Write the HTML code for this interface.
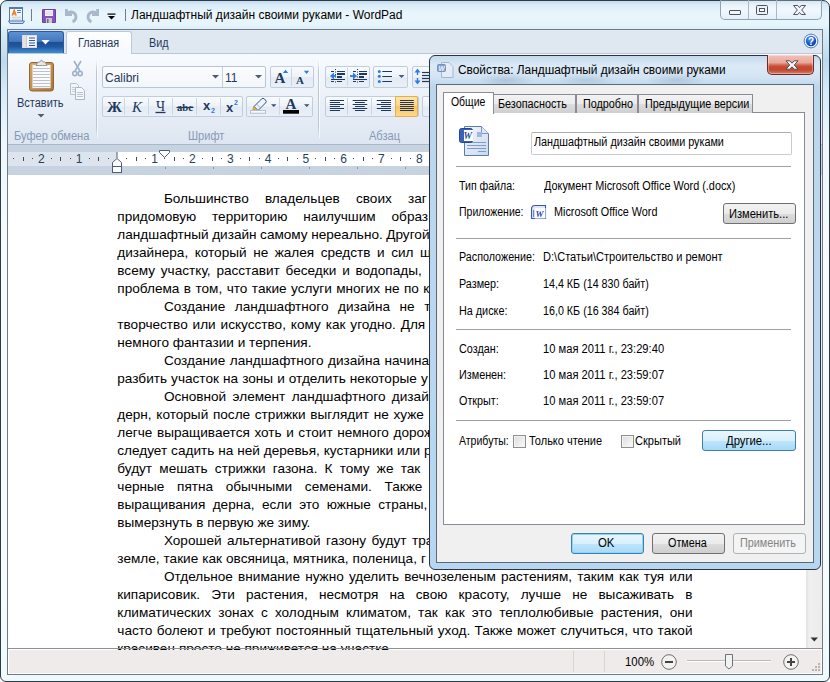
<!DOCTYPE html>
<html><head><meta charset="utf-8">
<style>
*{box-sizing:border-box;margin:0;padding:0}
html,body{width:830px;height:682px;overflow:hidden;background:#fff}
body{position:relative;font-family:"Liberation Sans",sans-serif;font-size:12px;color:#000}
.a{position:absolute}
.sx{display:inline-block;transform-origin:0 0;white-space:nowrap}
#win{left:0;top:0;width:830px;height:682px;border:1px solid #2d3a47;border-radius:7px 7px 6px 6px;
 background:linear-gradient(180deg,#c4dcef 0px,#d9ecf8 4px,#e9f5fc 12px,#e6f5fb 24px,#d8eef8 29px,#bcd9ee 60px,#d6ecf8 90px,#eef7fc 140px,#f8fbfd 260px,#f6fbfd 600px,#eefafd 682px)}
#client{left:7px;top:29px;width:816px;height:646px;background:#fff;border:1px solid #707a86}
.dl,.dj{position:absolute;font-size:13.6px;line-height:16px;color:#000;white-space:nowrap}
.dj{white-space:normal;text-align:justify;text-align-last:justify}
.btnbox{border:1px solid #bfcddf;border-radius:2px;background:linear-gradient(180deg,#f8fafd 0,#eef3f9 48%,#e3eaf3 52%,#eaf0f7 100%)}
.sep{position:absolute;width:1px;height:17px;background:#cdd8e6}
.rn{font-size:12px;color:#2b3f5c;line-height:14px}
.dt{font-size:12px;line-height:14px;white-space:nowrap}
.tab{border:1px solid #898c95;border-bottom:none;background:linear-gradient(180deg,#f2f2f2 0,#ebebeb 50%,#dddddd 51%,#cfcfcf 100%)}
.btn{border:1px solid #707070;border-radius:3px;background:linear-gradient(180deg,#f2f2f2 0,#ebebeb 50%,#dddddd 51%,#cfcfcf 100%)}
.btnhot{border-color:#3c7fb1;background:linear-gradient(180deg,#eaf6fd 0,#d9f0fc 50%,#bee6fd 51%,#a7d9f5 100%)}
.chk{width:13px;height:13px;border:1px solid #8e8f8f;background:linear-gradient(135deg,#dcdcdc,#fbfbfb);box-shadow:inset 0 0 0 1px #f4f4f4}
.tq{font-size:12px;color:#1e395b}
</style></head><body>
<div id="win" class="a"></div>
<!-- title bar content -->
<!-- QAT -->
<svg class="a" style="left:8px;top:6px" width="17" height="18" viewBox="0 0 17 18">
 <defs><linearGradient id="wpg" x1="0" y1="0" x2="0" y2="1"><stop offset="0" stop-color="#ffffff"/><stop offset="1" stop-color="#e4ecf5"/></linearGradient></defs>
 <rect x="1.5" y="1.5" width="13" height="14" fill="url(#wpg)" stroke="#4f7cb3" stroke-width="1"/>
 <rect x="1" y="1" width="14" height="2" fill="#4f7cb3"/>
 <path d="M4.2 9.5 L6.2 4.2 L8.2 9.5 M5 7.8 H7.4" fill="none" stroke="#f37c1c" stroke-width="1.4"/>
 <g stroke="#3a86dc" stroke-width="1"><line x1="9" y1="4.5" x2="13" y2="4.5"/><line x1="9" y1="6.5" x2="13" y2="6.5"/></g>
 <g stroke="#b3bcc8" stroke-width="0.6"><line x1="4" y1="11.3" x2="13" y2="11.3"/><line x1="4" y1="13.3" x2="13" y2="13.3"/></g>
 <path d="M0.5 15 H16.5 L15 17.5 H2 Z" fill="#cfdced" stroke="#4f7cb3" stroke-width="1"/>
</svg>
<div class="a" style="left:31px;top:9px;width:1px;height:12px;background:#6d7d8e"></div>
<svg class="a" style="left:42px;top:9px" width="14" height="14" viewBox="0 0 14 14">
 <rect x="0" y="0" width="14" height="14" rx="1" fill="#8456bd"/>
 <rect x="0.5" y="0.5" width="13" height="13" rx="1" fill="none" stroke="#6a3ea3"/>
 <rect x="3" y="1" width="8" height="6" fill="#f4f2f8"/>
 <g stroke="#cfc6df" stroke-width="0.7"><line x1="3.5" y1="3" x2="10.5" y2="3"/><line x1="3.5" y1="5" x2="10.5" y2="5"/></g>
 <rect x="4" y="9" width="6" height="5" fill="#c9c9cf"/>
 <rect x="5" y="10" width="1.5" height="4" fill="#6a6a72"/>
</svg>
<svg class="a" style="left:64px;top:8px" width="15" height="16" viewBox="0 0 15 16">
 <path d="M3.46 5.46 A5 5 0 1 1 8.55 13.75" fill="none" stroke="#a9b7ca" stroke-width="3"/>
 <path d="M1 1 H3.8 V5.2 H8 V8 H1 Z" fill="#a9b7ca"/>
</svg>
<svg class="a" style="left:85px;top:8px" width="15" height="16" viewBox="0 0 15 16">
 <g transform="translate(15,0) scale(-1,1)">
 <path d="M3.46 5.46 A5 5 0 1 1 8.55 13.75" fill="none" stroke="#a9b7ca" stroke-width="3"/>
 <path d="M1 1 H3.8 V5.2 H8 V8 H1 Z" fill="#a9b7ca"/>
 </g>
</svg>
<svg class="a" style="left:107px;top:13px" width="9" height="7" viewBox="0 0 9 7"><rect x="0.5" y="0.5" width="8" height="1.2" fill="#000"/><path d="M1 3 H8 L4.5 6.5Z" fill="#000"/></svg>
<div class="a" style="left:125px;top:9px;width:1px;height:12px;background:#6d7d8e"></div>
<!-- caption buttons -->
<div class="a" style="left:720px;top:0px;width:102px;height:20px;border:1px solid #8fa2b6;border-top:none;border-radius:0 0 5px 5px;background:linear-gradient(180deg,rgba(255,255,255,0.25),rgba(255,255,255,0.5) 50%,rgba(220,235,247,0.6))"></div>
<div class="a" style="left:748px;top:0px;width:1px;height:19px;background:#a9b9ca"></div>
<div class="a" style="left:776px;top:0px;width:1px;height:19px;background:#a9b9ca"></div>
<div class="a" style="left:729px;top:10px;width:12px;height:5px;border:1px solid #4a5360;border-radius:1px;background:#f3f5f8"></div>
<div class="a" style="left:756px;top:5px;width:12px;height:10px;border:1px solid #4a5360;border-radius:1.5px;background:#eef1f5"></div>
<div class="a" style="left:759px;top:8px;width:6px;height:4px;border:1px solid #4a5360;background:#fbfcfd"></div>
<svg class="a" style="left:793px;top:5px" width="13" height="10" viewBox="0 0 13 10">
 <path d="M0.5 0.5 H4.8 L6.5 2.6 L8.2 0.5 H12.5 L8.7 5 L12.5 9.5 H8.2 L6.5 7.4 L4.8 9.5 H0.5 L4.3 5 Z" fill="#f3f5f8" stroke="#4a5360" stroke-width="1" stroke-linejoin="round"/>
</svg>

<div id="title" class="a" style="left:131px;top:7.5px;font-size:12px;color:#000;white-space:nowrap">Ландшафтный дизайн своими руками - WordPad</div>

<!-- client -->
<div id="client" class="a"></div>
<!-- tab row -->
<div class="a" style="left:8px;top:30px;width:814px;height:23px;background:#dfe7f1"></div>
<div class="a" style="left:8px;top:53px;width:814px;height:1px;background:#b8c7da"></div>
<!-- ribbon body -->
<div class="a" style="left:8px;top:54px;width:814px;height:90px;background:linear-gradient(180deg,#f7fafe 0%,#eef3fa 40%,#e4ebf4 75%,#dde6f1 100%)"></div>
<div class="a" style="left:8px;top:144px;width:814px;height:1px;background:#a9b8cb"></div>

<!-- app button -->
<div class="a" style="left:8px;top:31px;width:56px;height:22px;border:1px solid #2c5aa0;border-bottom:none;border-radius:3px 3px 0 0;background:linear-gradient(180deg,#5b92d2 0,#4478bd 45%,#1f4d93 48%,#2358a0 70%,#3d8fd3 100%)"></div>
<svg class="a" style="left:22px;top:35px" width="30" height="14" viewBox="0 0 30 14">
 <rect x="0.5" y="0.5" width="14" height="12" fill="#f4f4f4" stroke="#dcdcdc"/>
 <rect x="1" y="1" width="3" height="11" fill="#e2e2e2"/>
 <line x1="4.5" y1="1" x2="4.5" y2="12" stroke="#c8c8c8"/>
 <g stroke="#2c5aa0" stroke-width="1"><line x1="7" y1="3" x2="13" y2="3"/><line x1="7" y1="5.5" x2="13" y2="5.5"/><line x1="7" y1="8" x2="13" y2="8"/><line x1="7" y1="10.5" x2="13" y2="10.5"/></g>
 <path d="M19.5 5 L27.5 5 L23.5 9.5 Z" fill="#fff"/>
</svg>
<!-- home tab -->
<div class="a" style="left:66px;top:31px;width:66px;height:23px;border:1px solid #bac9db;border-bottom:none;border-radius:3px 3px 0 0;background:linear-gradient(180deg,#fdfeff,#f6f9fd)"></div>
<div class="a tq" style="left:78px;top:36px"><span class="sx" style="transform:scaleX(0.9)">Главная</span></div>
<div class="a tq" style="left:149px;top:36px"><span class="sx" style="transform:scaleX(0.9)">Вид</span></div>
<!-- help -->
<svg class="a" style="left:803px;top:33px" width="16" height="16" viewBox="0 0 16 16">
 <defs><radialGradient id="hg" cx="0.4" cy="0.3" r="0.75"><stop offset="0" stop-color="#5d9cf5"/><stop offset="0.55" stop-color="#1d5fd8"/><stop offset="1" stop-color="#0d3a9e"/></radialGradient></defs>
 <circle cx="8" cy="8" r="6.9" fill="#f4f8fd" stroke="#4a7cc9" stroke-width="1"/>
 <circle cx="8" cy="8" r="5.2" fill="url(#hg)"/>
 <text x="8.1" y="11.8" font-family="Liberation Sans" font-weight="bold" font-size="10" fill="#fff" text-anchor="middle">?</text>
</svg>
<!-- group separators -->
<div class="a" style="left:96px;top:60px;width:1px;height:78px;background:linear-gradient(180deg,rgba(180,195,215,0),#b8c6d8 15%,#b8c6d8 85%,rgba(180,195,215,0))"></div>
<div class="a" style="left:97px;top:60px;width:1px;height:78px;background:rgba(255,255,255,0.7)"></div>
<div class="a" style="left:318px;top:60px;width:1px;height:78px;background:linear-gradient(180deg,rgba(180,195,215,0),#b8c6d8 15%,#b8c6d8 85%,rgba(180,195,215,0))"></div>
<div class="a" style="left:319px;top:60px;width:1px;height:78px;background:rgba(255,255,255,0.7)"></div>

<!-- clipboard -->
<svg class="a" style="left:28px;top:59px" width="27" height="33" viewBox="0 0 27 33">
 <defs><linearGradient id="cb" x1="0" y1="0" x2="1" y2="1"><stop offset="0" stop-color="#d9a864"/><stop offset="1" stop-color="#a8743a"/></linearGradient></defs>
 <rect x="1.5" y="3.5" width="24" height="28.5" rx="2.5" fill="url(#cb)" stroke="#8f6534" stroke-width="1"/>
 <rect x="4.5" y="6" width="18" height="23" fill="#fbfbfb" stroke="#d8d0c4" stroke-width="0.5"/>
 <g stroke="#b9c3cf" stroke-width="1"><line x1="5" y1="9.5" x2="22" y2="9.5"/><line x1="5" y1="12.5" x2="22" y2="12.5"/><line x1="5" y1="15.5" x2="22" y2="15.5"/><line x1="5" y1="18.5" x2="22" y2="18.5"/><line x1="5" y1="21.5" x2="22" y2="21.5"/><line x1="5" y1="24.5" x2="22" y2="24.5"/><line x1="5" y1="27.5" x2="22" y2="27.5"/></g>
 <path d="M8 6.5 L10 3 L12 3 L13.5 0.8 L15 3 L17 3 L19 6.5 Z" fill="#e8e8e8" stroke="#8a8a8a" stroke-width="0.8"/>
</svg>
<div class="a" style="left:17px;top:96px;color:#1e395b;font-size:12px"><span class="sx" style="transform:scaleX(0.915)">Вставить</span></div>
<svg class="a" style="left:37px;top:114px" width="8" height="4" viewBox="0 0 8 4"><path d="M0.5 0 L7.5 0 L4 3.5Z" fill="#4d5e74"/></svg>
<!-- scissors -->
<svg class="a" style="left:72px;top:60px" width="11" height="17" viewBox="0 0 11 17">
 <g fill="none" stroke="#9fb1c8" stroke-width="1.6"><line x1="2" y1="1" x2="8" y2="11"/><line x1="9" y1="1" x2="3" y2="11"/><circle cx="2.8" cy="13.5" r="2.1"/><circle cx="8.2" cy="13.5" r="2.1"/></g>
</svg>
<!-- copy -->
<svg class="a" style="left:69px;top:82px" width="17" height="18" viewBox="0 0 17 18">
 <path d="M1.5 1.5 H7.5 L9.5 3.5 V12.5 H1.5 Z" fill="#f2f5f9" stroke="#b7c2cf"/>
 <path d="M6.5 5.5 H12.5 L15.5 8.5 V17.5 H6.5 Z" fill="#f6f8fb" stroke="#a9b6c6"/>
 <g stroke="#b9c4d2"><line x1="8" y1="10.5" x2="14" y2="10.5"/><line x1="8" y1="12.5" x2="14" y2="12.5"/><line x1="8" y1="14.5" x2="14" y2="14.5"/></g>
 <g stroke="#c5cdd8"><line x1="3" y1="5.5" x2="6" y2="5.5"/><line x1="3" y1="7.5" x2="6" y2="7.5"/><line x1="3" y1="9.5" x2="6" y2="9.5"/></g>
</svg>

<!-- font name + size boxes -->
<div class="a" style="left:102px;top:66px;width:164px;height:22px;border:1px solid #b6c5d8;border-radius:2px;background:linear-gradient(180deg,#fbfcfe,#f3f6fa)"></div>
<div class="a" style="left:222px;top:67px;width:1px;height:20px;background:#c2cfdf"></div>
<div class="a" style="left:105px;top:70.5px;color:#1e395b;font-size:12px"><span class="sx" style="transform:scaleX(1.0)">Calibri</span></div>
<div class="a" style="left:225px;top:70.5px;color:#1e395b;font-size:12px">11</div>
<svg class="a" style="left:212px;top:75px" width="7" height="4"><path d="M0 0H7L3.5 3.5Z" fill="#4a5d78"/></svg>
<svg class="a" style="left:255px;top:75px" width="7" height="4"><path d="M0 0H7L3.5 3.5Z" fill="#4a5d78"/></svg>
<!-- grow/shrink -->
<div class="a btnbox" style="left:270px;top:66px;width:44px;height:22px"></div>
<div class="a" style="left:291px;top:68px;width:1px;height:18px;background:#c9d5e3"></div>
<svg class="a" style="left:272px;top:68px" width="42" height="18" viewBox="0 0 42 18">
 <text x="2.5" y="15" font-family="Liberation Serif" font-weight="bold" font-size="15" fill="#1e395b">A</text>
 <path d="M10.9 5 L13.55 1.8 L16.2 5Z" fill="#2c7be0"/>
 <text x="24" y="15.5" font-family="Liberation Serif" font-weight="bold" font-size="11" fill="#1e395b">A</text>
 <path d="M31.9 2.8 H37.2 L34.55 5.9Z" fill="#2c7be0"/>
</svg>
<!-- B I U S sub sup -->
<div class="a btnbox" style="left:102px;top:96px;width:141px;height:21px"></div>
<div class="a sep" style="left:124px;top:98px"></div>
<div class="a sep" style="left:148px;top:98px"></div>
<div class="a sep" style="left:172px;top:98px"></div>
<div class="a sep" style="left:196px;top:98px"></div>
<div class="a sep" style="left:220px;top:98px"></div>
<svg class="a" style="left:102px;top:96px" width="142" height="21" viewBox="0 0 142 21">
 <text x="5" y="15.5" font-family="Liberation Serif" font-weight="bold" font-size="15" fill="#1e395b">Ж</text>
 <text x="30" y="15.5" font-family="Liberation Serif" font-style="italic" font-size="15" fill="#1e395b">К</text>
 <text x="54" y="14.5" font-family="Liberation Serif" font-size="14" fill="#1e395b">Ч</text>
 <line x1="53.5" y1="16.5" x2="63.5" y2="16.5" stroke="#1e395b" stroke-width="1.3"/>
 <text x="75" y="14.8" font-family="Liberation Serif" font-weight="bold" font-size="10.5" fill="#1e395b" textLength="16" lengthAdjust="spacingAndGlyphs">abc</text>
 <line x1="74.5" y1="11.5" x2="91.5" y2="11.5" stroke="#1e395b" stroke-width="1.1"/>
 <text x="101" y="14" font-family="Liberation Sans" font-weight="bold" font-size="13" fill="#1e395b">x</text>
 <text x="109" y="17" font-family="Liberation Sans" font-weight="bold" font-size="7" fill="#2c7be0">2</text>
 <text x="124" y="16" font-family="Liberation Sans" font-weight="bold" font-size="13" fill="#1e395b">x</text>
 <text x="132" y="9" font-family="Liberation Sans" font-weight="bold" font-size="7" fill="#2c7be0">2</text>
</svg>
<!-- highlight / color -->
<div class="a btnbox" style="left:246px;top:96px;width:67px;height:21px"></div>
<div class="a sep" style="left:279px;top:98px"></div>
<svg class="a" style="left:246px;top:96px" width="68" height="21" viewBox="0 0 68 21">
 <path d="M8 10.5 L15.5 3 Q17 1.5 18.5 3 L19.5 4 Q21 5.5 19.5 7 L12 14.5 Z" fill="#eef3fb" stroke="#3b5580" stroke-width="1"/>
 <line x1="10.5" y1="8" x2="14.5" y2="12" stroke="#8aa0bf" stroke-width="0.8"/>
 <path d="M8 10.5 L12 14.5 L6.2 15.2 Z" fill="#e2b23a" stroke="#8b6d2a" stroke-width="0.5"/>
 <rect x="4.5" y="14.5" width="15" height="2.8" fill="#f4f7fb" stroke="#b4c2d4" stroke-width="1"/>
 <path d="M25 8.2 H30.5 L27.75 10.9Z" fill="#3b5070"/>
 <text x="39.6" y="12.8" font-family="Liberation Serif" font-weight="bold" font-size="15" fill="#1e395b" style="text-rendering:geometricPrecision">A</text>
 <rect x="37" y="14" width="16" height="3.7" fill="#000"/>
 <path d="M58 8.2 H63.5 L60.75 10.9Z" fill="#3b5070"/>
</svg>

<!-- paragraph: indent -->
<div class="a btnbox" style="left:325px;top:66px;width:45px;height:22px"></div>
<div class="a sep" style="left:347px;top:68px;height:18px"></div>
<svg class="a" style="left:325px;top:66px" width="46" height="22" viewBox="0 0 46 22">
 <g stroke="#1e395b" stroke-width="1">
  <line x1="6" y1="5.5" x2="9" y2="5.5"/><line x1="12" y1="5.5" x2="20" y2="5.5"/>
  <line x1="6" y1="13.5" x2="20" y2="13.5"/><line x1="6" y1="15.5" x2="9" y2="15.5"/><line x1="12" y1="15.5" x2="17" y2="15.5"/>
  <line x1="28" y1="5.5" x2="31" y2="5.5"/><line x1="34" y1="5.5" x2="42" y2="5.5"/>
  <line x1="28" y1="13.5" x2="42" y2="13.5"/><line x1="28" y1="15.5" x2="31" y2="15.5"/><line x1="34" y1="15.5" x2="39" y2="15.5"/>
 </g>
 <g stroke="#1e395b" stroke-width="2"><line x1="12" y1="8" x2="20" y2="8"/><line x1="12" y1="11" x2="17" y2="11"/><line x1="34" y1="8" x2="42" y2="8"/><line x1="34" y1="11" x2="39" y2="11"/></g>
 <line x1="10.5" y1="3" x2="10.5" y2="18" stroke="#1e395b" stroke-dasharray="1 1.5"/>
 <line x1="32.5" y1="3" x2="32.5" y2="18" stroke="#1e395b" stroke-dasharray="1 1.5"/>
 <path d="M5 10 L9 6.5 V13.5Z" fill="#2c7be0"/><line x1="7" y1="10" x2="11" y2="10" stroke="#2c7be0" stroke-width="1.8"/>
 <path d="M32 10 L28 6.5 V13.5Z" fill="#2c7be0"/><line x1="25" y1="10" x2="29" y2="10" stroke="#2c7be0" stroke-width="1.8"/>
</svg>
<!-- list -->
<div class="a btnbox" style="left:373px;top:66px;width:35px;height:22px"></div>
<svg class="a" style="left:373px;top:66px" width="36" height="22" viewBox="0 0 36 22">
 <g fill="#2c7be0"><circle cx="6.3" cy="5.5" r="1.5"/><circle cx="6.3" cy="10.2" r="1.5"/><circle cx="6.3" cy="15.5" r="1.5"/></g>
 <g stroke="#1e395b" stroke-width="1"><line x1="9.3" y1="5.5" x2="19" y2="5.5"/><line x1="9.3" y1="10.5" x2="19" y2="10.5"/><line x1="9.3" y1="15.5" x2="19" y2="15.5"/></g>
 <path d="M25.5 9 H31.5 L28.5 12Z" fill="#4a5d78"/>
</svg>
<!-- line spacing -->
<div class="a btnbox" style="left:412px;top:66px;width:30px;height:22px"></div>
<svg class="a" style="left:412px;top:66px" width="20" height="22" viewBox="0 0 20 22">
 <line x1="5.5" y1="5" x2="5.5" y2="9" stroke="#2c7be0" stroke-width="1.4"/><line x1="5.5" y1="12" x2="5.5" y2="16" stroke="#2c7be0" stroke-width="1.4"/>
 <path d="M2.5 6.5 L5.5 2.5 L8.5 6.5Z M2.5 14.5 L5.5 18.5 L8.5 14.5Z" fill="#2c7be0"/>
 <g stroke="#1e395b" stroke-width="1.2"><line x1="10" y1="6.5" x2="20" y2="6.5"/><line x1="10" y1="9.5" x2="20" y2="9.5"/><line x1="10" y1="12.5" x2="20" y2="12.5"/><line x1="10" y1="15.5" x2="20" y2="15.5"/></g>
</svg>
<!-- align -->
<div class="a btnbox" style="left:325px;top:96px;width:94px;height:21px"></div>
<div class="a sep" style="left:347px;top:98px"></div>
<div class="a sep" style="left:371px;top:98px"></div>
<div class="a" style="left:395px;top:96px;width:23px;height:21px;border:1px solid #e2b052;border-radius:0 2px 2px 0;background:linear-gradient(180deg,#ffe5a8 0,#fcd58a 45%,#fbc45c 50%,#fdd98e 100%)"></div>
<div class="a btnbox" style="left:422px;top:96px;width:20px;height:21px"></div>
<svg class="a" style="left:325px;top:96px" width="120" height="21" viewBox="0 0 120 21">
 <g stroke="#1e395b" stroke-width="1"><line x1="4.8" y1="4.5" x2="19" y2="4.5"/><line x1="27.7" y1="4.5" x2="42.2" y2="4.5"/><line x1="51.8" y1="4.5" x2="66" y2="4.5"/><line x1="75" y1="4.5" x2="88.8" y2="4.5"/><line x1="4.8" y1="6.5" x2="15" y2="6.5"/><line x1="30" y1="6.5" x2="39.8" y2="6.5"/><line x1="56" y1="6.5" x2="66" y2="6.5"/><line x1="75" y1="6.5" x2="88.8" y2="6.5"/><line x1="4.8" y1="8.5" x2="19" y2="8.5"/><line x1="27.7" y1="8.5" x2="42.2" y2="8.5"/><line x1="51.8" y1="8.5" x2="66" y2="8.5"/><line x1="75" y1="8.5" x2="88.8" y2="8.5"/><line x1="4.8" y1="10.5" x2="15" y2="10.5"/><line x1="30" y1="10.5" x2="39.8" y2="10.5"/><line x1="56" y1="10.5" x2="66" y2="10.5"/><line x1="75" y1="10.5" x2="88.8" y2="10.5"/><line x1="4.8" y1="12.5" x2="19" y2="12.5"/><line x1="27.7" y1="12.5" x2="42.2" y2="12.5"/><line x1="51.8" y1="12.5" x2="66" y2="12.5"/><line x1="75" y1="12.5" x2="88.8" y2="12.5"/><line x1="4.8" y1="14.5" x2="15" y2="14.5"/><line x1="30" y1="14.5" x2="39.8" y2="14.5"/><line x1="56" y1="14.5" x2="66" y2="14.5"/><line x1="75" y1="14.5" x2="88.8" y2="14.5"/><line x1="104" y1="6.5" x2="112" y2="6.5"/><line x1="104" y1="8.5" x2="112" y2="8.5"/><line x1="104" y1="10.5" x2="112" y2="10.5"/><line x1="104" y1="12.5" x2="112" y2="12.5"/><line x1="104" y1="14.5" x2="112" y2="14.5"/></g>
</svg>

<!-- group labels -->
<div class="a" style="left:14px;top:129px;color:#8799b4;font-size:12px"><span class="sx" style="transform:scaleX(0.925)">Буфер обмена</span></div>
<div class="a" style="left:188px;top:129px;color:#8799b4;font-size:12px"><span class="sx" style="transform:scaleX(0.92)">Шрифт</span></div>
<div class="a" style="left:369px;top:129px;color:#8799b4;font-size:12px"><span class="sx" style="transform:scaleX(0.92)">Абзац</span></div>

<!-- ruler band -->
<div class="a" style="left:8px;top:145px;width:814px;height:30px;background:#c8d3e2"></div>
<div class="a" style="left:8px;top:152px;width:798px;height:14px;background:#dde4ee"></div>
<div class="a" style="left:117px;top:152px;width:575px;height:14px;background:#fff"></div>
<div class="a" style="left:13px;top:158px;width:1px;height:1px;background:#3a4a60"></div>
<div class="a" style="left:23px;top:157px;width:1px;height:4px;background:#3a4a60"></div>
<div class="a" style="left:32px;top:158px;width:1px;height:1px;background:#3a4a60"></div>
<div class="a rn" style="left:37.9px;top:152px">2</div>
<div class="a" style="left:51px;top:158px;width:1px;height:1px;background:#3a4a60"></div>
<div class="a" style="left:60px;top:157px;width:1px;height:4px;background:#3a4a60"></div>
<div class="a" style="left:70px;top:158px;width:1px;height:1px;background:#3a4a60"></div>
<div class="a rn" style="left:75.7px;top:152px">1</div>
<div class="a" style="left:89px;top:158px;width:1px;height:1px;background:#3a4a60"></div>
<div class="a" style="left:98px;top:157px;width:1px;height:4px;background:#3a4a60"></div>
<div class="a" style="left:108px;top:158px;width:1px;height:1px;background:#3a4a60"></div>
<div class="a" style="left:126px;top:158px;width:1px;height:1px;background:#3a4a60"></div>
<div class="a" style="left:136px;top:157px;width:1px;height:4px;background:#3a4a60"></div>
<div class="a" style="left:145px;top:158px;width:1px;height:1px;background:#3a4a60"></div>
<div class="a rn" style="left:151.3px;top:152px">1</div>
<div class="a" style="left:164px;top:158px;width:1px;height:1px;background:#3a4a60"></div>
<div class="a" style="left:174px;top:157px;width:1px;height:4px;background:#3a4a60"></div>
<div class="a" style="left:183px;top:158px;width:1px;height:1px;background:#3a4a60"></div>
<div class="a rn" style="left:189.1px;top:152px">2</div>
<div class="a" style="left:202px;top:158px;width:1px;height:1px;background:#3a4a60"></div>
<div class="a" style="left:212px;top:157px;width:1px;height:4px;background:#3a4a60"></div>
<div class="a" style="left:221px;top:158px;width:1px;height:1px;background:#3a4a60"></div>
<div class="a rn" style="left:226.9px;top:152px">3</div>
<div class="a" style="left:240px;top:158px;width:1px;height:1px;background:#3a4a60"></div>
<div class="a" style="left:249px;top:157px;width:1px;height:4px;background:#3a4a60"></div>
<div class="a" style="left:259px;top:158px;width:1px;height:1px;background:#3a4a60"></div>
<div class="a rn" style="left:264.7px;top:152px">4</div>
<div class="a" style="left:278px;top:158px;width:1px;height:1px;background:#3a4a60"></div>
<div class="a" style="left:287px;top:157px;width:1px;height:4px;background:#3a4a60"></div>
<div class="a" style="left:297px;top:158px;width:1px;height:1px;background:#3a4a60"></div>
<div class="a rn" style="left:302.5px;top:152px">5</div>
<div class="a" style="left:315px;top:158px;width:1px;height:1px;background:#3a4a60"></div>
<div class="a" style="left:325px;top:157px;width:1px;height:4px;background:#3a4a60"></div>
<div class="a" style="left:334px;top:158px;width:1px;height:1px;background:#3a4a60"></div>
<div class="a rn" style="left:340.3px;top:152px">6</div>
<div class="a" style="left:353px;top:158px;width:1px;height:1px;background:#3a4a60"></div>
<div class="a" style="left:363px;top:157px;width:1px;height:4px;background:#3a4a60"></div>
<div class="a" style="left:372px;top:158px;width:1px;height:1px;background:#3a4a60"></div>
<div class="a rn" style="left:378.1px;top:152px">7</div>
<div class="a" style="left:391px;top:158px;width:1px;height:1px;background:#3a4a60"></div>
<div class="a" style="left:400px;top:157px;width:1px;height:4px;background:#3a4a60"></div>
<div class="a" style="left:410px;top:158px;width:1px;height:1px;background:#3a4a60"></div>
<div class="a rn" style="left:415.9px;top:152px">8</div>
<div class="a" style="left:429px;top:158px;width:1px;height:1px;background:#3a4a60"></div>
<div class="a" style="left:438px;top:157px;width:1px;height:4px;background:#3a4a60"></div>
<div class="a" style="left:448px;top:158px;width:1px;height:1px;background:#3a4a60"></div>
<svg class="a" style="left:159px;top:150px" width="11" height="9" viewBox="0 0 11 9"><path d="M0.5 0.5 H10.5 V2.5 L5.5 7.5 L0.5 2.5 Z" fill="#fff" stroke="#4d5f78"/></svg>
<svg class="a" style="left:111px;top:152px" width="12" height="22" viewBox="0 0 12 22"><path d="M6 0 V6" stroke="#4d5f78"/><path d="M1.5 14.5 V10.5 L6 6.5 L10.5 10.5 V14.5 Z" fill="#fff" stroke="#4d5f78"/><rect x="1.5" y="14.5" width="9" height="6" fill="#fff" stroke="#4d5f78"/></svg>

<div class="a" style="left:165px;top:167px;width:1px;height:2px;background:#8797ad"></div><div class="a" style="left:213px;top:167px;width:1px;height:2px;background:#8797ad"></div><div class="a" style="left:261px;top:167px;width:1px;height:2px;background:#8797ad"></div><div class="a" style="left:309px;top:167px;width:1px;height:2px;background:#8797ad"></div><div class="a" style="left:357px;top:167px;width:1px;height:2px;background:#8797ad"></div><div class="a" style="left:405px;top:167px;width:1px;height:2px;background:#8797ad"></div>
<!-- document -->
<div class="a" style="left:8px;top:175px;width:798px;height:473px;background:#fff"></div>
<div id="doc">
<div class="dl" style="left:163.9px;top:191.29px;word-spacing:12.40px">Большинство владельцев своих заг</div>
<div class="dl" style="left:117.3px;top:209.29px;word-spacing:12.15px">придомовую территорию наилучшим образ</div>
<div class="dl" style="left:117.3px;top:227.29px;word-spacing:-0.28px">ландшафтный дизайн самому нереально. Другой</div>
<div class="dl" style="left:117.3px;top:245.29px;word-spacing:2.74px">дизайнера, который не жалея средств и сил ще</div>
<div class="dl" style="left:117.3px;top:263.29px;word-spacing:2.03px">всему участку, расставит беседки и водопады,</div>
<div class="dl" style="left:117.3px;top:281.29px;word-spacing:0.67px">проблема в том, что такие услуги многих не по ка</div>
<div class="dl" style="left:163.9px;top:299.29px;word-spacing:5.75px">Создание ландшафтного дизайна не т</div>
<div class="dl" style="left:117.3px;top:317.29px;word-spacing:1.11px">творчество или искусство, кому как угодно. Для</div>
<div class="dl" style="left:117.3px;top:335.29px;word-spacing:0.00px">немного фантазии и терпения.</div>
<div class="dl" style="left:163.9px;top:353.29px;word-spacing:0.75px">Создание ландшафтного дизайна начина</div>
<div class="dl" style="left:117.3px;top:371.29px;word-spacing:0.31px">разбить участок на зоны и отделить некоторые у</div>
<div class="dl" style="left:163.9px;top:389.29px;word-spacing:2.58px">Основной элемент ландшафтного дизай</div>
<div class="dl" style="left:117.3px;top:407.29px;word-spacing:0.91px">дерн, который после стрижки выглядит не хуже</div>
<div class="dl" style="left:117.3px;top:425.29px;word-spacing:0.80px">легче выращивается хоть и стоит немного дорож</div>
<div class="dl" style="left:117.3px;top:443.29px;word-spacing:0.14px">следует садить на ней деревья, кустарники или р</div>
<div class="dl" style="left:117.3px;top:461.29px;word-spacing:3.42px">будут мешать стрижки газона. К тому же так</div>
<div class="dl" style="left:117.3px;top:479.29px;word-spacing:8.91px">черные пятна обычными семенами. Также</div>
<div class="dl" style="left:117.3px;top:497.29px;word-spacing:3.59px">выращивания дерна, если это южные страны,</div>
<div class="dl" style="left:117.3px;top:515.29px;word-spacing:0.00px">вымерзнуть в первую же зиму.</div>
<div class="dl" style="left:163.9px;top:533.29px;word-spacing:1.74px">Хорошей альтернативой газону будут тра</div>
<div class="dl" style="left:117.3px;top:551.29px;word-spacing:0.21px">земле, такие как овсяница, мятника, поленица, г</div>
<div class="dj" style="left:163.9px;top:569.29px;width:528.6px">Отдельное внимание нужно уделить вечнозеленым растениям, таким как туя или</div>
<div class="dj" style="left:117.3px;top:587.29px;width:575.2px">кипарисовик. Эти растения, несмотря на свою красоту, лучше не высаживать в</div>
<div class="dj" style="left:117.3px;top:605.29px;width:575.2px">климатических зонах с холодным климатом, так как это теплолюбивые растения, они</div>
<div class="dj" style="left:117.3px;top:623.29px;width:575.2px">часто болеют и требуют постоянный тщательный уход. Также может случиться, что такой</div>
<div class="dl" style="left:117.3px;top:641.29px;width:575.2px">красивец просто не приживется на участке.</div>
</div>
<!-- scrollbar -->
<div class="a" style="left:806px;top:175px;width:16px;height:473px;background:linear-gradient(90deg,#e3e3e3 0,#f0f0f0 2px,#ececec 100%);border-left:1px solid #e6e6e6"></div>
<!-- status bar -->
<div class="a" style="left:8px;top:648px;width:814px;height:1px;background:#8e9095"></div>
<div class="a" style="left:9px;top:650px;width:812px;height:23px;background:#eeebea"></div>

<div class="a" style="left:573px;top:651px;width:1px;height:21px;background:#d9d6d2"></div>
<div class="a" style="left:604px;top:651px;width:1px;height:21px;background:#d9d6d2"></div>
<div class="a" style="left:625px;top:654.8px;font-size:12px;line-height:14px;color:#000;white-space:nowrap"><span class="sx" style="transform:scaleX(0.95)">100%</span></div>
<svg class="a" style="left:660px;top:653px" width="140" height="18" viewBox="0 0 140 18">
 <circle cx="9" cy="9" r="7.3" fill="#f4f3f2" stroke="#6f6f6f" stroke-width="1"/>
 <line x1="5" y1="9" x2="13" y2="9" stroke="#444" stroke-width="2"/>
 <line x1="27" y1="7.5" x2="111" y2="7.5" stroke="#b9b9b9" stroke-width="1"/>
 <line x1="27" y1="8.5" x2="111" y2="8.5" stroke="#fff" stroke-width="1"/>
 <path d="M65.5 1.5 H72.5 V13 L69 16 L65.5 13 Z" fill="#f2f2f2" stroke="#6f7378" stroke-width="1"/>
 <circle cx="131" cy="9" r="7.3" fill="#f4f3f2" stroke="#6f6f6f" stroke-width="1"/>
 <line x1="127" y1="9" x2="135" y2="9" stroke="#444" stroke-width="2"/>
 <line x1="131" y1="5" x2="131" y2="13" stroke="#444" stroke-width="2"/>
</svg>
<svg class="a" style="left:811px;top:662px" width="10" height="10" viewBox="0 0 10 10">
 <g fill="#b9b6b2"><rect x="7" y="1" width="2" height="2"/><rect x="4" y="4" width="2" height="2"/><rect x="7" y="4" width="2" height="2"/><rect x="1" y="7" width="2" height="2"/><rect x="4" y="7" width="2" height="2"/><rect x="7" y="7" width="2" height="2"/></g>
</svg>
<svg class="a" style="left:810px;top:637px" width="9" height="6" viewBox="0 0 9 6"><path d="M0.5 0.5 H8 L4.25 4.5 Z" fill="#333"/></svg>

<!-- dialog -->
<div id="dlg" class="a" style="left:429px;top:55px;width:392px;height:515px;border:1px solid #2b3440;border-radius:6px;background:linear-gradient(180deg,#c3d9ee 0,#dceaf6 10px,#d2e3f2 22px,#bcd6ee 30px,#b8d6f2 100%)"></div>
<div class="a" style="left:436px;top:68px;width:330px;height:16px;background:radial-gradient(ellipse 28px 7px at 70px 12px,rgba(70,100,140,0.22),rgba(70,100,140,0) 100%),radial-gradient(ellipse 30px 7px at 150px 12px,rgba(70,100,140,0.18),rgba(70,100,140,0) 100%),radial-gradient(ellipse 30px 7px at 240px 12px,rgba(70,100,140,0.2),rgba(70,100,140,0) 100%)"></div>
<div class="a" style="left:436px;top:84px;width:378px;height:479px;background:#f0f0f0;border:1px solid #5c6a78"></div>

<div class="a" style="left:767px;top:55px;width:47px;height:20px;border:1px solid #6b2b22;border-top:none;border-radius:0 0 5px 5px;background:linear-gradient(180deg,#f2c0b6 0,#e9a89b 40%,#d36a55 52%,#c9472f 62%,#c24a33 80%,#d9806b 100%);box-shadow:inset 0 0 0 1px rgba(255,255,255,0.35)"></div>
<svg class="a" style="left:785px;top:60px" width="14" height="10" viewBox="0 0 14 10"><path d="M1 0.8 H4.8 L7 3.2 L9.2 0.8 H13 L9.3 5 L13 9.2 H9.2 L7 6.8 L4.8 9.2 H1 L4.7 5 Z" fill="#f6f6f6" stroke="#4d4f5c" stroke-width="1" stroke-linejoin="round"/></svg>
<svg class="a" style="left:437px;top:62px;opacity:0.55" width="17" height="16" viewBox="0 0 17 16">
 <path d="M4.5 0.5 H12 L16 4.5 V15.5 H4.5 Z" fill="#eef3fa" stroke="#7d93b3"/>
 <rect x="0.5" y="2.5" width="8" height="7" rx="1" fill="#3d63b8" stroke="#2a4c93"/>
 <text x="1.6" y="8.6" font-family="Liberation Sans" font-weight="bold" font-style="italic" font-size="6.5" fill="#fff">W</text>
</svg>
<div class="a" style="left:458px;top:62.7px;font-size:12px;line-height:14px;color:#000;white-space:nowrap"><span class="sx" style="transform:scaleX(0.99)">Свойства: Ландшафтный дизайн своими руками</span></div>
<div class="a" style="left:443px;top:112px;width:362px;height:413px;border:1px solid #898c95;background:#fff"></div>
<div class="a tab" style="left:493px;top:94px;width:83px;height:19px"></div>
<div class="a dt" style="left:498px;top:96.8px;color:#000;"><span class="sx" style="transform:scaleX(0.9)">Безопасность</span></div>
<div class="a tab" style="left:576px;top:94px;width:62px;height:19px"></div>
<div class="a dt" style="left:582.5px;top:96.8px;color:#000;"><span class="sx" style="transform:scaleX(0.9)">Подробно</span></div>
<div class="a tab" style="left:638px;top:94px;width:115px;height:19px"></div>
<div class="a dt" style="left:644.5px;top:96.8px;color:#000;"><span class="sx" style="transform:scaleX(0.9)">Предыдущие версии</span></div>
<div class="a" style="left:443px;top:92px;width:51px;height:22px;border:1px solid #898c95;border-bottom:none;background:#fff"></div>
<div class="a dt" style="left:451px;top:94.5px;color:#000;"><span class="sx" style="transform:scaleX(0.87)">Общие</span></div>
<svg class="a" style="left:458px;top:125px" width="33" height="32" viewBox="0 0 33 32">
 <defs><linearGradient id="pg" x1="0" y1="0" x2="1" y2="1"><stop offset="0" stop-color="#f5f8fd"/><stop offset="1" stop-color="#c9d8ee"/></linearGradient></defs>
 <path d="M6.5 1.5 H23.5 L30.5 8.5 V30.5 H6.5 Z" fill="url(#pg)" stroke="#5a7bb0" stroke-width="1"/>
 <path d="M23.5 1.5 V8.5 H30.5" fill="#dfe8f5" stroke="#7d96c0" stroke-width="1"/>
 <rect x="19" y="7" width="5" height="5" fill="#9fb8de"/>
 <g stroke="#7f9bcc" stroke-width="1"><line x1="9" y1="17.5" x2="28" y2="17.5"/><line x1="9" y1="20.5" x2="28" y2="20.5"/><line x1="9" y1="23.5" x2="28" y2="23.5"/><line x1="20" y1="26.5" x2="28" y2="26.5"/></g>
 <rect x="1.5" y="3.5" width="13" height="14" rx="2" fill="#3a63b8" stroke="#23468e"/>
 <rect x="6" y="5" width="9" height="11" fill="#fff"/>
 <text x="5.5" y="13.8" font-family="Liberation Serif" font-weight="bold" font-style="italic" font-size="9.5" fill="#1f4a9e">W</text>
</svg>
<div class="a" style="left:531px;top:132px;width:261px;height:23px;border:1px solid #c6ccd4;border-top-color:#abadb3;border-radius:2px;background:#fff"></div>
<div class="a dt" style="left:534px;top:134.8px;color:#000;"><span class="sx" style="transform:scaleX(0.9)">Ландшафтный дизайн своими руками</span></div>
<div class="a" style="left:456px;top:166px;width:335px;height:1px;background:#a0a0a0"></div>
<div class="a" style="left:456px;top:238px;width:335px;height:1px;background:#a0a0a0"></div>
<div class="a" style="left:456px;top:329px;width:335px;height:1px;background:#a0a0a0"></div>
<div class="a" style="left:456px;top:420px;width:335px;height:1px;background:#a0a0a0"></div>
<div class="a dt" style="left:459px;top:178.6px;color:#000;"><span class="sx" style="transform:scaleX(0.88)">Тип файла:</span></div>
<div class="a dt" style="left:543.5px;top:178.6px;color:#000;"><span class="sx" style="transform:scaleX(0.905)">Документ Microsoft Office Word (.docx)</span></div>
<div class="a dt" style="left:459px;top:204.6px;color:#000;"><span class="sx" style="transform:scaleX(0.875)">Приложение:</span></div>
<svg class="a" style="left:530px;top:204px" width="18" height="17" viewBox="0 0 18 17">
 <path d="M1.5 14.5 V5 Q1.5 1.5 5 1.5 H15.5 V14.5 Z" fill="#dfe6f6" stroke="#3a58b4" stroke-width="1.1"/>
 <rect x="5" y="4" width="10.5" height="10.5" fill="#fafcff"/>
 <line x1="3.5" y1="6" x2="3.5" y2="13" stroke="#6f86cc" stroke-width="1.2"/>
 <text x="5.6" y="12.8" font-family="Liberation Serif" font-weight="bold" font-style="italic" font-size="9" fill="#2c49a8">W</text>
</svg>
<div class="a dt" style="left:554px;top:204.6px;color:#000;"><span class="sx" style="transform:scaleX(0.9)">Microsoft Office Word</span></div>
<div class="a btn" style="left:723px;top:203px;width:73px;height:21px"></div>
<div class="a dt" style="left:729px;top:206.8px;color:#000;"><span class="sx" style="transform:scaleX(0.925)">Изменить...</span></div>
<div class="a dt" style="left:459px;top:249.8px;color:#000;"><span class="sx" style="transform:scaleX(0.895)">Расположение:</span></div>
<div class="a dt" style="left:543.2px;top:249.8px;color:#000;"><span class="sx" style="transform:scaleX(0.922)">D:\Статьи\Строительство и ремонт</span></div>
<div class="a dt" style="left:459px;top:276.5px;color:#000;"><span class="sx" style="transform:scaleX(0.9)">Размер:</span></div>
<div class="a dt" style="left:543.2px;top:276.5px;color:#000;"><span class="sx" style="transform:scaleX(0.894)">14,4 КБ (14 830 байт)</span></div>
<div class="a dt" style="left:459px;top:303.8px;color:#000;"><span class="sx" style="transform:scaleX(0.9)">На диске:</span></div>
<div class="a dt" style="left:543.2px;top:303.8px;color:#000;"><span class="sx" style="transform:scaleX(0.894)">16,0 КБ (16 384 байт)</span></div>
<div class="a dt" style="left:459px;top:342.1px;color:#000;"><span class="sx" style="transform:scaleX(0.9)">Создан:</span></div>
<div class="a dt" style="left:543.4px;top:342.1px;color:#000;"><span class="sx" style="transform:scaleX(0.93)">10 мая 2011 г., 23:29:40</span></div>
<div class="a dt" style="left:459px;top:367.7px;color:#000;"><span class="sx" style="transform:scaleX(0.9)">Изменен:</span></div>
<div class="a dt" style="left:543.4px;top:367.7px;color:#000;"><span class="sx" style="transform:scaleX(0.93)">10 мая 2011 г., 23:59:07</span></div>
<div class="a dt" style="left:459px;top:393.6px;color:#000;"><span class="sx" style="transform:scaleX(0.9)">Открыт:</span></div>
<div class="a dt" style="left:543.4px;top:393.6px;color:#000;"><span class="sx" style="transform:scaleX(0.93)">10 мая 2011 г., 23:59:07</span></div>
<div class="a dt" style="left:459px;top:434.2px;color:#000;"><span class="sx" style="transform:scaleX(0.877)">Атрибуты:</span></div>
<div class="a chk" style="left:513px;top:434.5px"></div>
<div class="a dt" style="left:529px;top:434.2px;color:#000;"><span class="sx" style="transform:scaleX(0.916)">Только чтение</span></div>
<div class="a chk" style="left:621px;top:434.5px"></div>
<div class="a dt" style="left:635.2px;top:434.2px;color:#000;"><span class="sx" style="transform:scaleX(0.92)">Скрытый</span></div>
<div class="a btn btnhot" style="left:702px;top:430px;width:94px;height:21px"></div>
<div class="a dt" style="left:726px;top:434.1px;color:#000;"><span class="sx" style="transform:scaleX(0.94)">Другие...</span></div>
<div class="a btn btnhot" style="left:571px;top:533px;width:73px;height:21px;border-color:#3c7fb1;box-shadow:inset 0 0 0 1px #8fd3f7"></div>
<div class="a dt" style="left:598px;top:536.3px;color:#000;"><span class="sx" style="transform:scaleX(0.95)">OK</span></div>
<div class="a btn" style="left:652px;top:533px;width:73px;height:21px"></div>
<div class="a dt" style="left:668px;top:536.3px;color:#000;"><span class="sx" style="transform:scaleX(0.9)">Отмена</span></div>
<div class="a" style="left:733px;top:533px;width:73px;height:21px;border:1px solid #adb2b5;border-radius:3px;background:#f4f4f4"></div>
<div class="a dt" style="left:740px;top:536.3px;color:#838383;"><span class="sx" style="transform:scaleX(0.9)">Применить</span></div>
</body></html>
